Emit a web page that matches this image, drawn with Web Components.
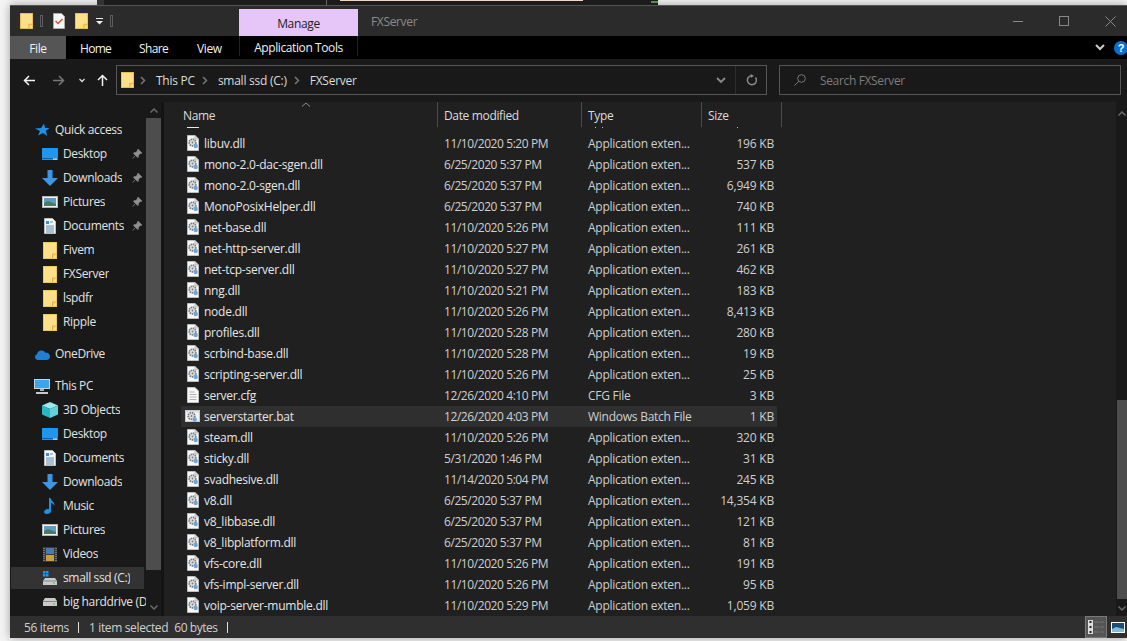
<!DOCTYPE html>
<html>
<head>
<meta charset="utf-8">
<title>FXServer</title>
<style>
  html, body { margin: 0; height: 641px; overflow: hidden; background: #f4f4f4; }
  body { font-family: "Open Sans", "Liberation Sans", sans-serif; font-size: 12px; letter-spacing: -.35px; color: #e6e6e6; }
</style>
</head>
<body>
<fx-backdrop></fx-backdrop>
<fx-window>
  <fx-titlebar slot="title"></fx-titlebar>
  <fx-ribbon slot="ribbon"></fx-ribbon>
  <fx-addressbar slot="address"></fx-addressbar>
  <fx-nav slot="nav"></fx-nav>
  <fx-list slot="list"></fx-list>
  <fx-statusbar slot="status"></fx-statusbar>
</fx-window>

<script>
// shared icon drawings, all inline svg
const folder = (w = 14, h = 17) => `<svg width="${w}" height="${h}" viewBox="0 0 14 17"><rect x=".5" y=".5" width="13" height="16" fill="#ffe08a" stroke="#f2c65a"/><path d="M9.500 16.500v-4.500h4" fill="#f7d06c" stroke="#e4b040"/></svg>`;
const gear = `<circle cx="5.500" cy="7.500" r="3.300" fill="#e4e4e4" stroke="#727c86" stroke-width="1.700" stroke-dasharray="1.500 .7"/><circle cx="5.500" cy="7.500" r="1" fill="#727c86"/><circle cx="8.700" cy="11" r="2.200" fill="#6ea6d8"/>`;
const icons = {
  folder: folder(),
  dll: `<svg width="12" height="16" viewBox="0 0 12 16"><path d="M.5.5h7.500l3.500 3.500v11.500H.5z" fill="#f7f7f7" stroke="#bdbdbd"/><path d="M8 .5v3.500h3.500" fill="#dcdcdc" stroke="#bdbdbd"/>${gear}</svg>`,
  cfg: `<svg width="12" height="16" viewBox="0 0 12 16"><path d="M.5.5h7.500l3.500 3.500v11.500H.5z" fill="#f7f7f7" stroke="#c4c4c4"/><path d="M2.500 5h5M2.500 7.500h7M2.500 10h7M2.500 12.500h7" stroke="#b0b0b0"/></svg>`,
  bat: `<svg width="15" height="12" viewBox="0 0 15 12"><rect x=".5" y=".5" width="14" height="11" fill="#f2f2f2" stroke="#c8c8c8"/><rect x="1" y="1" width="13" height="1.500" fill="#dcdcdc"/><g transform="translate(1 -1.500)">${gear}</g></svg>`,
  star: `<svg width="15" height="14" viewBox="0 0 15 14"><path d="M9 .5l1 4.500h4.500l-3.600 2.800 1.300 5.200-4.200-3-5 2.500 2-4.500L0 5.500l6.200-.5z" fill="#1e90e8"/></svg>`,
  desktop: `<svg width="16" height="12" viewBox="0 0 16 12"><rect width="16" height="12" fill="#1f95ee"/><path d="M0 10.500h16" stroke="#0b5fa8"/><path d="M11 11h4" stroke="#fff"/></svg>`,
  down: `<svg width="16" height="16" viewBox="0 0 16 16"><path d="M5.500 0h5v8H16l-8 8-8-8h5.500z" fill="#3a96e6"/></svg>`,
  pictures: `<svg width="16" height="12" viewBox="0 0 16 12"><rect x=".5" y=".5" width="15" height="11" fill="#f2f2f2" stroke="#b5b5b5"/><rect x="2" y="2" width="12" height="8" fill="#5d9cc7"/><path d="M2 7l4-2 8 3v2H2z" fill="#4d7a62"/></svg>`,
  documents: `<svg width="12" height="16" viewBox="0 0 12 16"><path d="M.5.5h8l3 3v12H.5z" fill="#f6f6f6" stroke="#bdbdbd"/><path d="M2 3h3v3H2z" fill="#3a8fd0"/><path d="M6 4h3M2 8h8M2 10h8M2 12h8M2 14h8" stroke="#5a8ab5"/></svg>`,
  onedrive: `<svg width="16" height="11" viewBox="0 0 16 11"><path d="M3.500 11A3 3 0 0 1 3 5.200 4.500 4.500 0 0 1 11.400 3.800 3.600 3.600 0 0 1 13 11z" fill="#1f7fd6"/></svg>`,
  pc: `<svg width="16" height="15" viewBox="0 0 16 15"><rect width="16" height="10" fill="#c6d4de"/><rect x="1" y="1" width="14" height="8" fill="#3aa4ec"/><path d="M6 10h4v2H6z" fill="#9fb0bb"/><path d="M2 13h12v2H2z" fill="#c3c9cd"/></svg>`,
  cube: `<svg width="16" height="16" viewBox="0 0 16 16"><path d="M8 0l8 3.500-8 3.500-8-3.500z" fill="#9be8ee"/><path d="M0 3.500l8 3.500v9l-8-3.500z" fill="#2bb6c4"/><path d="M16 3.500L8 7v9l8-3.500z" fill="#5fd2dc"/></svg>`,
  music: `<svg width="12" height="16" viewBox="0 0 12 16"><path d="M5 0h1.500c.5 3 4.500 4 4 8-.8-2-2.300-3-3.500-3v8c0 2-2 3-4 3s-3-1-3-2 1.500-3 3.500-3c.6 0 1.200.1 1.500.3z" fill="#1d93e8"/></svg>`,
  videos: `<svg width="14" height="15" viewBox="0 0 14 15"><rect width="14" height="15" fill="#3a3a3a"/><rect x="3" y="1" width="8" height="6" fill="#4c78b8"/><rect x="3" y="8" width="8" height="6" fill="#c8a03c"/><path d="M1 1v13M13 1v13" stroke="#aaa" stroke-dasharray="1 1"/></svg>`,
  ssd: `<svg width="14" height="14" viewBox="0 0 14 14"><path d="M2 7h10l2 3v4H0v-4z" fill="#c9c9c9"/><path d="M0 10h14" stroke="#8a8a8a"/><path d="M10 12h2" stroke="#62d06a" stroke-width="1.500"/><path d="M0 0h2.500v2.500H0zM3 0h2.500v2.500H3zM0 3h2.500v2.500H0zM3 3h2.500v2.500H3z" fill="#1f95ee"/></svg>`,
  hdd: `<svg width="14" height="8" viewBox="0 0 14 8"><path d="M2 0h10l2 3v5H0V3z" fill="#c9c9c9"/><path d="M0 3.500h14" stroke="#8a8a8a"/><path d="M10 6h2" stroke="#62d06a" stroke-width="1.500"/></svg>`,
  pin: `<svg width="10" height="10" viewBox="0 0 10 10"><path d="M6 0l4 4-1 .7-.7-.2L6.500 6.300 6.500 8 5.500 8.500 3.600 6.400.7 9.500 3.600 6.400 1.500 4.500 2 3.500h1.700L5.500 1.700l-.2-.7z" fill="#8f8f8f" stroke="#8f8f8f" stroke-width=".5"/></svg>`,
  chev: `<svg width="6" height="9" viewBox="0 0 6 9"><path d="M1 1l3.500 3.500L1 8" fill="none" stroke="#777" stroke-width="1.500"/></svg>`
};

// small helper so each element only has to give its css and html
class FxBase extends HTMLElement {
  constructor() {
    super();
    this.attachShadow({ mode: 'open' });
  }
  connectedCallback() {
    this.shadowRoot.innerHTML = `<style>${this.css()}</style>${this.html()}`;
  }
  css() { return ':host { display: block; }'; }
  html() { return '<slot></slot>'; }
}

class FxBackdrop extends FxBase {
  css() {
    return `:host { display: flex; height: 5px; padding-left: 97px; background: #f4f4f4; }
      .other { width: 561px; box-sizing: border-box; border-left: 7px solid #333; background:
        linear-gradient(#f6d6c8, #f6d6c8) 236px 0 / 243px 1px no-repeat,
        linear-gradient(#666, #666) 222px 0 / 1px 5px no-repeat,
        linear-gradient(#5a8a50, #5a8a50) right 1px / 7px 2px no-repeat,
        #1c1c1c; }`;
  }
  html() { return '<div class="other"></div>'; }
}

class FxWindow extends FxBase {
  css() {
    return `:host { display: grid; grid-template-columns: 151px 3px 1fr; grid-template-rows: 31px 23px 43px 514px 22px;
        height: 633px; margin-left: 10px; background: #202020; box-shadow: 0 0 9px rgba(0,0,0,.35); }
      ::slotted([slot=title]), ::slotted([slot=ribbon]), ::slotted([slot=address]), ::slotted([slot=status]) { grid-column: 1 / -1; }
      ::slotted([slot=nav]) { grid-column: 1; }
      ::slotted([slot=list]) { grid-column: 3; }
      .split { grid-column: 2; grid-row: 4; background: #141414; }`;
  }
  html() {
    return `<slot name="title"></slot><slot name="ribbon"></slot><slot name="address"></slot>
      <slot name="nav"></slot><div class="split"></div><slot name="list"></slot><slot name="status"></slot>`;
  }
}

class FxTitlebar extends FxBase {
  css() {
    return `:host { display: flex; align-items: stretch; background: #2b2b2b; border-top: 1px solid #555; box-sizing: border-box; }
      .quick { display: flex; align-items: center; width: 229px; padding: 0 0 0 10px; box-sizing: border-box; flex: none; }
      .bar { width: 3px; height: 12px; box-sizing: border-box; border: 1px solid #5c5c5c; }
      .manage { width: 119px; margin-top: 3px; padding-top: 2px; box-sizing: border-box; background: #e6c6f8; color: #222; display: flex; align-items: center; justify-content: center; }
      .name { margin-left: 13px; color: #8c8c8c; align-self: center; }
      .ctl { margin-left: auto; display: flex; align-items: center; gap: 35px; padding-right: 11px; }`;
  }
  html() {
    return `<div class="quick">
        ${folder(13, 16)}
        <span class="bar" style="margin-left:7px"></span>
        <svg style="margin-left:10px" width="12" height="16" viewBox="0 0 12 16"><path d="M.5.5h8l3 3v12H.5z" fill="#f6f6f6" stroke="#aaa"/><path d="M2.500 8l2.500 2.500L9.500 6" fill="none" stroke="#e0532b" stroke-width="1.500"/></svg>
        <span style="margin-left:10px;display:flex">${folder(13, 16)}</span>
        <svg style="margin-left:8px" width="7" height="7" viewBox="0 0 7 7"><path d="M0 .5h7" stroke="#eee"/><path d="M0 3h7L3.500 6.500z" fill="#eee"/></svg>
        <span class="bar" style="margin-left:7px"></span>
      </div>
      <div class="manage">Manage</div>
      <div class="name">FXServer</div>
      <div class="ctl">
        <svg width="11" height="11" viewBox="0 0 11 11"><path d="M0 5.500h10" stroke="#8a8a8a"/></svg>
        <svg width="11" height="11" viewBox="0 0 11 11"><rect x=".5" y=".5" width="9" height="9" fill="none" stroke="#8a8a8a"/></svg>
        <svg width="11" height="11" viewBox="0 0 11 11"><path d="M.5.500l10 10M10.500.500l-10 10" stroke="#8a8a8a"/></svg>
      </div>`;
  }
}

class FxRibbon extends FxBase {
  css() {
    return `:host { display: flex; align-items: stretch; background: #000; color: #f0f0f0; letter-spacing: -.4px; }
      .file { width: 56px; padding-top: 2px; box-sizing: border-box; background: #555; display: flex; align-items: center; justify-content: center; }
      .tab { box-sizing: border-box; padding: 2px 0 0 14px; align-self: center; }
      .group { width: 119px; padding-top: 2px; box-sizing: border-box; border: solid #222; border-width: 0 1px; display: flex; align-items: center; justify-content: center; margin-bottom: 3px; }
      .right { margin-left: auto; display: flex; align-items: center; gap: 9px; margin-right: -1px; }
      .help { width: 14px; height: 14px; border-radius: 50%; background: #0b6fd1; color: #fff; font: bold 11px "Liberation Sans", sans-serif; display: flex; align-items: center; justify-content: center; }`;
  }
  html() {
    return `<div class="file">File</div>
      <span class="tab" style="width:59px;letter-spacing:-.7px">Home</span><span class="tab" style="width:58px;letter-spacing:-.6px">Share</span><span class="tab" style="width:56px">View</span>
      <div class="group">Application Tools</div>
      <div class="right">
        <svg width="10" height="7" viewBox="0 0 10 7"><path d="M1 1l4 4 4-4" fill="none" stroke="#ccc" stroke-width="2"/></svg>
        <div class="help">?</div>
      </div>`;
  }
}

class FxAddressbar extends FxBase {
  css() {
    return `:host { display: flex; align-items: center; background: #191919; padding: 0 6px 1px 13px; box-sizing: border-box; }
      .btns { display: flex; align-items: center; width: 93px; flex: none; }
      .box { height: 30px; box-sizing: border-box; border: 1px solid #555; display: flex; align-items: center; }
      .path { width: 651px; color: #dcdcdc; padding-left: 4px; letter-spacing: -.25px; }
      .path > svg:first-child { margin-right: 6px; }
      .path .c { margin: 0 10px 0 0; display: flex; }
      .path .t { margin-right: 7px; }
      .drop { margin-left: auto; display: flex; align-items: center; height: 100%; }
      .drop .v { padding: 0 9px; border-right: 1px solid #2c2c2c; height: 100%; display: flex; align-items: center; }
      .drop .r { width: 30px; display: flex; justify-content: center; }
      .search { flex: 1; margin-left: 12px; color: #7c7c7c; padding-left: 14px; gap: 14px; }`;
  }
  html() {
    return `<div class="btns">
        <svg width="12" height="11" viewBox="0 0 12 11"><path d="M12 5.500H1.500M6 1L1.500 5.500 6 10" fill="none" stroke="#f2f2f2" stroke-width="1.500"/></svg>
        <svg style="margin-left:18px" width="12" height="11" viewBox="0 0 12 11"><path d="M0 5.500h10.500M6 1l4.500 4.500L6 10" fill="none" stroke="#777" stroke-width="1.500"/></svg>
        <svg style="margin-left:14px" width="6" height="5" viewBox="0 0 6 5"><path d="M.5 1L3 3.500 5.500 1" fill="none" stroke="#ddd" stroke-width="1.300"/></svg>
        <svg style="margin-left:12px" width="11" height="12" viewBox="0 0 11 12"><path d="M5.500 12V1.500M1 6l4.500-4.500L10 6" fill="none" stroke="#f2f2f2" stroke-width="1.500"/></svg>
      </div>
      <div class="box path">
        ${folder(13, 16)}
        <span class="c">${icons.chev}</span><span class="t">This PC</span>
        <span class="c">${icons.chev}</span><span class="t">small ssd (C:)</span>
        <span class="c">${icons.chev}</span><span class="t">FXServer</span>
        <div class="drop">
          <div class="v"><svg width="10" height="7" viewBox="0 0 10 7"><path d="M1 1l4 4 4-4" fill="none" stroke="#8a8a8a" stroke-width="1.800"/></svg></div>
          <div class="r"><svg width="11" height="12" viewBox="0 0 11 12"><path d="M9.500 3.500A4.500 4.500 0 1 1 6 1.700" fill="none" stroke="#8a8a8a" stroke-width="1.500"/><path d="M4.500 0l3.500 1.800-3 2.200z" fill="#8a8a8a"/></svg></div>
        </div>
      </div>
      <div class="box search">
        <svg width="12" height="12" viewBox="0 0 12 12"><circle cx="7.500" cy="4.500" r="3.800" fill="none" stroke="#777"/><path d="M4.800 7.200L.5 11.500" stroke="#777"/></svg>
        <span>Search FXServer</span>
      </div>`;
  }
}

class FxNavItem extends FxBase {
  css() {
    return `:host { display: flex; align-items: center; height: 24px; white-space: nowrap; position: relative; color: #e2e2e2; }
      :host([top]) .ic { margin-left: 22px; width: 23px; }
      :host([selected]) { background: #333; height: 22px; margin: 1px 2px 1px 1px; }
      .ic { margin-left: 30px; width: 23px; display: flex; justify-content: center; padding-right: 3px; box-sizing: border-box; flex: none; }
      :host([selected]) .ic { margin-left: 29px; }
      .pin { position: absolute; right: 4px; top: 7px; display: flex; }
      .txt { overflow: hidden; margin-bottom: 1px; }`;
  }
  html() {
    const pin = this.hasAttribute('pinned') ? `<span class="pin">${icons.pin}</span>` : '';
    return `<span class="ic">${icons[this.getAttribute('icon')]}</span><span class="txt"><slot></slot></span>${pin}`;
  }
}

class FxNav extends FxBase {
  css() {
    return `:host { display: flex; background: #191919; overflow: hidden; }
      .items { width: 136px; flex: none; padding-top: 16px; overflow: hidden; box-sizing: border-box; }
      .gap { height: 8px; }
      .bar { width: 15px; display: flex; flex-direction: column; align-items: center; flex: none; }
      .arrow { height: 16px; display: flex; align-items: center; }
      .thumb { background: #4d4d4d; width: 100%; height: 452px; }
      .rest { flex: 1; }`;
  }
  html() {
    const up = '<svg width="8" height="5" viewBox="0 0 8 5"><path d="M.5 4.500L4 1l3.500 3.500" fill="none" stroke="#6a6a6a" stroke-width="1.500"/></svg>';
    const dn = '<svg width="8" height="5" viewBox="0 0 8 5"><path d="M.5.500L4 4 7.500.500" fill="none" stroke="#6a6a6a" stroke-width="1.500"/></svg>';
    const row = (icon, text, extra = '') => `<fx-nav-item icon="${icon}" ${extra}>${text}</fx-nav-item>`;
    return `<div class="items">
        ${row('star', 'Quick access', 'top')}
        ${row('desktop', 'Desktop', 'pinned')}
        ${row('down', 'Downloads', 'pinned')}
        ${row('pictures', 'Pictures', 'pinned')}
        ${row('documents', 'Documents', 'pinned')}
        ${row('folder', 'Fivem')}
        ${row('folder', 'FXServer')}
        ${row('folder', 'lspdfr')}
        ${row('folder', 'Ripple')}
        <div class="gap"></div>
        ${row('onedrive', 'OneDrive', 'top')}
        <div class="gap"></div>
        ${row('pc', 'This PC', 'top')}
        ${row('cube', '3D Objects')}
        ${row('desktop', 'Desktop')}
        ${row('documents', 'Documents')}
        ${row('down', 'Downloads')}
        ${row('music', 'Music')}
        ${row('pictures', 'Pictures')}
        ${row('videos', 'Videos')}
        ${row('ssd', 'small ssd (C:)', 'selected')}
        ${row('hdd', 'big harddrive (D')}
      </div>
      <div class="bar">
        <div class="arrow">${up}</div>
        <div class="thumb"></div>
        <div class="rest"></div>
        <div class="arrow" style="margin-bottom:1px">${dn}</div>
      </div>`;
  }
}

class FxRow extends FxBase {
  css() {
    return `:host { display: flex; align-items: center; height: 21px; margin-left: 17px; width: 596px; white-space: nowrap; color: #e6e6e6; box-sizing: border-box; }
      :host([hot]) { background: #2f2f2f; }
      .ic { width: 23px; display: flex; justify-content: center; margin-bottom: 2px; flex: none; }
      .name { width: 240px; flex: none; letter-spacing: -.25px; }
      .date { width: 144px; flex: none; color: #cfcfcf; letter-spacing: -.42px; }
      .type { width: 120px; flex: none; color: #cfcfcf; letter-spacing: -.25px; }
      .size { width: 66px; flex: none; text-align: right; color: #cfcfcf; letter-spacing: -.2px; }`;
  }
  html() {
    const a = n => this.getAttribute(n);
    return `<span class="ic">${icons[a('icon') || 'dll']}</span><span class="name">${a('name')}</span>
      <span class="date">${a('date')}</span><span class="type">${a('type') || 'Application exten...'}</span><span class="size">${a('size')}</span>`;
  }
}

class FxList extends FxBase {
  css() {
    return `:host { display: flex; background: #202020; min-width: 0; }
      .main { flex: 1; min-width: 0; display: flex; flex-direction: column; }
      .head { display: flex; height: 25px; color: #dcdcdc; flex: none; position: relative; }
      .head div { border-right: 1px solid #4a4a4a; box-sizing: border-box; padding: 5px 0 0 6px; }
      .sort { position: absolute; left: 137px; top: 0; }
      .rows { flex: 1; overflow: hidden; }
      /* bottom edge of the row scrolled away above libuv.dll */
      .stub { height: 1px; margin-bottom: 5px; background:
        linear-gradient(#e8e8e8, #e8e8e8) 23px 0 / 12px 1px no-repeat,
        linear-gradient(#bbb, #bbb) 431px 0 / 1px 1px no-repeat,
        linear-gradient(#bbb, #bbb) 438px 0 / 1px 1px no-repeat,
        linear-gradient(#bbb, #bbb) 573px 0 / 1px 1px no-repeat; }
      .bar { width: 11px; background: #191919; flex: none; position: relative; }
      .bar .thumb { position: absolute; left: 1px; right: 0; top: 298px; height: 199px; background: #4d4d4d; }
      .bar svg { position: absolute; left: 2px; }`;
  }
  html() {
    const rows = [
      ['libuv.dll', '11/10/2020 5:20 PM', '196 KB'],
      ['mono-2.0-dac-sgen.dll', '6/25/2020 5:37 PM', '537 KB'],
      ['mono-2.0-sgen.dll', '6/25/2020 5:37 PM', '6,949 KB'],
      ['MonoPosixHelper.dll', '6/25/2020 5:37 PM', '740 KB'],
      ['net-base.dll', '11/10/2020 5:26 PM', '111 KB'],
      ['net-http-server.dll', '11/10/2020 5:27 PM', '261 KB'],
      ['net-tcp-server.dll', '11/10/2020 5:27 PM', '462 KB'],
      ['nng.dll', '11/10/2020 5:21 PM', '183 KB'],
      ['node.dll', '11/10/2020 5:26 PM', '8,413 KB'],
      ['profiles.dll', '11/10/2020 5:28 PM', '280 KB'],
      ['scrbind-base.dll', '11/10/2020 5:28 PM', '19 KB'],
      ['scripting-server.dll', '11/10/2020 5:26 PM', '25 KB'],
      ['server.cfg', '12/26/2020 4:10 PM', '3 KB', 'cfg', 'CFG File'],
      ['serverstarter.bat', '12/26/2020 4:03 PM', '1 KB', 'bat', 'Windows Batch File', 'hot'],
      ['steam.dll', '11/10/2020 5:26 PM', '320 KB'],
      ['sticky.dll', '5/31/2020 1:46 PM', '31 KB'],
      ['svadhesive.dll', '11/14/2020 5:04 PM', '245 KB'],
      ['v8.dll', '6/25/2020 5:37 PM', '14,354 KB'],
      ['v8_libbase.dll', '6/25/2020 5:37 PM', '121 KB'],
      ['v8_libplatform.dll', '6/25/2020 5:37 PM', '81 KB'],
      ['vfs-core.dll', '11/10/2020 5:26 PM', '191 KB'],
      ['vfs-impl-server.dll', '11/10/2020 5:26 PM', '95 KB'],
      ['voip-server-mumble.dll', '11/10/2020 5:29 PM', '1,059 KB']
    ];
    const body = rows.map(([name, date, size, icon, type, hot]) =>
      `<fx-row name="${name}" date="${date}" size="${size}" ${icon ? `icon="${icon}"` : ''} ${type ? `type="${type}"` : ''} ${hot ? 'hot' : ''}></fx-row>`).join('');
    return `<div class="main">
        <div class="head">
          <div style="width:274px;padding-left:19px">Name</div>
          <div style="width:144px">Date modified</div>
          <div style="width:120px">Type</div>
          <div style="width:80px">Size</div>
          <svg class="sort" width="10" height="5" viewBox="0 0 10 5"><path d="M1 4.500l4-3.500 4 3.500" fill="none" stroke="#8a8a8a"/></svg>
        </div>
        <div class="rows"><div class="stub"></div>${body}</div>
      </div>
      <div class="bar">
        <svg style="top:9px" width="8" height="5" viewBox="0 0 8 5"><path d="M.5 4.500L4 1l3.500 3.500" fill="none" stroke="#6a6a6a" stroke-width="1.500"/></svg>
        <div class="thumb"></div>
        <svg style="top:504px" width="8" height="5" viewBox="0 0 8 5"><path d="M.5.500L4 4 7.500.500" fill="none" stroke="#6a6a6a" stroke-width="1.500"/></svg>
      </div>`;
  }
}

class FxStatusbar extends FxBase {
  css() {
    return `:host { display: flex; align-items: center; background: #2f2f2f; color: #cfcfcf; padding-left: 14px; }
      .sep { width: 1px; height: 11px; background: #ddd; margin: 0 10px 0 9px; }
      .bytes { margin-left: 6px; letter-spacing: -.45px; }
      .views { margin-left: auto; display: flex; align-items: center; height: 100%; }
      .details { width: 22px; height: 22px; box-sizing: border-box; border: 1px solid #7a7a7a; background: #555; display: flex; align-items: center; justify-content: center; }
      .large { width: 14px; display: flex; margin: 0 2px 0 4px; }`;
  }
  html() {
    return `<span>56 items</span><span class="sep"></span><span>1 item selected</span><span class="bytes">60 bytes</span><span class="sep"></span>
      <div class="views">
        <div class="details"><svg width="16" height="14" viewBox="0 0 16 14"><rect width="5" height="14" fill="#ddd"/><path d="M1.500 2h2M1.500 7h2M1.500 12h2" stroke="#222" stroke-width="2"/><path d="M6 2h5M12 2h4M6 7h5M12 7h4M6 12h5M12 12h4" stroke="#777"/></svg></div>
        <div class="large"><svg width="14" height="11" viewBox="0 0 14 11"><rect x=".5" y=".5" width="13" height="10" fill="#1e4e78" stroke="#fff"/><path d="M1 7l4-2 8 2v3H1z" fill="#7cc0d8"/></svg></div>
      </div>`;
  }
}

customElements.define('fx-backdrop', FxBackdrop);
customElements.define('fx-window', FxWindow);
customElements.define('fx-titlebar', FxTitlebar);
customElements.define('fx-ribbon', FxRibbon);
customElements.define('fx-addressbar', FxAddressbar);
customElements.define('fx-nav-item', FxNavItem);
customElements.define('fx-nav', FxNav);
customElements.define('fx-row', FxRow);
customElements.define('fx-list', FxList);
customElements.define('fx-statusbar', FxStatusbar);
</script>
</body>
</html>
